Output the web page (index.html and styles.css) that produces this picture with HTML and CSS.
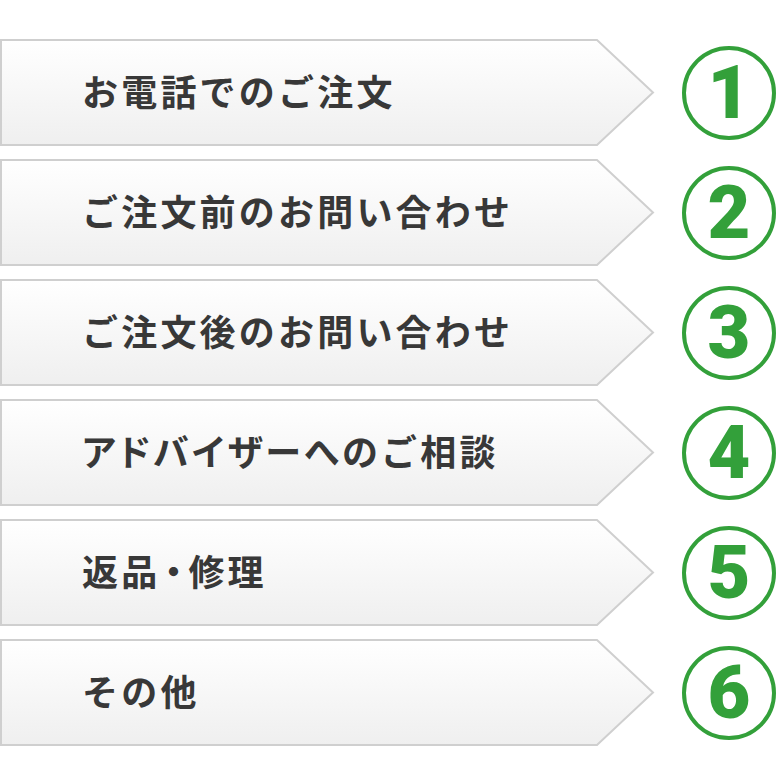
FILE: index.html
```html
<!DOCTYPE html>
<html lang="ja">
<head>
<meta charset="utf-8">
<link rel="stylesheet" href="styles.css">
</head>
<body>
<svg class="defs" width="0" height="0" aria-hidden="true">
  <defs>
    <linearGradient id="g" x1="0" y1="0" x2="0" y2="1">
      <stop offset="0" stop-color="#ffffff"/>
      <stop offset="1" stop-color="#efefef"/>
    </linearGradient>
  </defs>
</svg>
<ul class="menu">
  <li class="item">
    <div class="arrow">
      <svg class="shape" viewBox="0 0 655 107" width="655" height="107"><polygon points="1,1 597,1 653,53.5 597,106 1,106" fill="url(#g)" stroke="#cfcfcf" stroke-width="2"/></svg>
      <span class="label">お電話でのご注文</span>
    </div>
    <div class="num">1</div>
  </li>
  <li class="item">
    <div class="arrow">
      <svg class="shape" viewBox="0 0 655 107" width="655" height="107"><polygon points="1,1 597,1 653,53.5 597,106 1,106" fill="url(#g)" stroke="#cfcfcf" stroke-width="2"/></svg>
      <span class="label">ご注文前のお問い合わせ</span>
    </div>
    <div class="num">2</div>
  </li>
  <li class="item">
    <div class="arrow">
      <svg class="shape" viewBox="0 0 655 107" width="655" height="107"><polygon points="1,1 597,1 653,53.5 597,106 1,106" fill="url(#g)" stroke="#cfcfcf" stroke-width="2"/></svg>
      <span class="label">ご注文後のお問い合わせ</span>
    </div>
    <div class="num">3</div>
  </li>
  <li class="item">
    <div class="arrow">
      <svg class="shape" viewBox="0 0 655 107" width="655" height="107"><polygon points="1,1 597,1 653,53.5 597,106 1,106" fill="url(#g)" stroke="#cfcfcf" stroke-width="2"/></svg>
      <span class="label"><span class="kana">アドバイザーへ</span>のご相談</span>
    </div>
    <div class="num">4</div>
  </li>
  <li class="item">
    <div class="arrow">
      <svg class="shape" viewBox="0 0 655 107" width="655" height="107"><polygon points="1,1 597,1 653,53.5 597,106 1,106" fill="url(#g)" stroke="#cfcfcf" stroke-width="2"/></svg>
      <span class="label">返品<span class="dot">・</span>修理</span>
    </div>
    <div class="num">5</div>
  </li>
  <li class="item">
    <div class="arrow">
      <svg class="shape" viewBox="0 0 655 107" width="655" height="107"><polygon points="1,1 597,1 653,53.5 597,106 1,106" fill="url(#g)" stroke="#cfcfcf" stroke-width="2"/></svg>
      <span class="label">その他</span>
    </div>
    <div class="num">6</div>
  </li>
</ul>
</body>
</html>
```
FILE: styles.css
```css
html, body {
  margin: 0;
  padding: 0;
  background: #ffffff;
}
body {
  width: 780px;
  height: 780px;
  overflow: hidden;
}
.defs {
  position: absolute;
  width: 0;
  height: 0;
}
.menu {
  list-style: none;
  margin: 0;
  padding: 39px 0 0 0;
  display: flex;
  flex-direction: column;
  gap: 13px;
}
.item {
  display: flex;
  align-items: center;
  height: 107px;
}
.arrow {
  position: relative;
  width: 655px;
  height: 107px;
  display: flex;
  align-items: center;
  padding: 0 0 5px 82px;
  box-sizing: border-box;
}
.shape {
  position: absolute;
  left: 0;
  top: 0;
}
.label {
  position: relative;
  font-family: "Noto Sans CJK JP", "Noto Sans", sans-serif;
  font-weight: 700;
  font-size: 36px;
  letter-spacing: 3.2px;
  color: #383838;
  line-height: 1;
}
.kana {
  font-feature-settings: "palt";
  letter-spacing: 3px;
}
.dot {
  font-feature-settings: "palt";
  margin-left: 4px;
  letter-spacing: 6px;
}
.num {
  margin-left: 27px;
  width: 86px;
  height: 86px;
  border: 4px solid #33a03a;
  border-radius: 50%;
  display: flex;
  align-items: center;
  justify-content: center;
  font-family: "Roboto", "Liberation Sans", sans-serif;
  font-weight: 900;
  font-size: 74px;
  color: #33a03a;
  line-height: 1;
}
```
